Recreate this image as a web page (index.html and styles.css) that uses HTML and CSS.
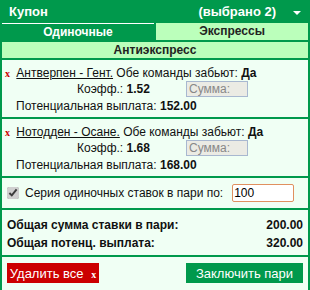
FILE: index.html
```
<!DOCTYPE html>
<html lang="ru">
<head>
    <meta charset="UTF-8">
    <title>Купон</title>
    <link rel="stylesheet" href="styles.css">
</head>
<body>
    <div class="coupon">
        <div class="coupon-head">
            <span class="title">Купон</span>
            <span class="count">(выбрано 2)</span>
            <span class="arrow"></span>
        </div>
        <div class="tabs">
            <div class="tab active">Одиночные</div>
            <div class="tab">Экспрессы</div>
        </div>
        <div class="tab wide">Антиэкспресс</div>
        <div class="coupon-body">
            <div class="bet">
                <div class="bet-line">
                    <span class="remove">x</span>
                    <a class="match">Антверпен - Гент.</a> Обе команды забьют: <b>Да</b>
                </div>
                <div class="bet-odds">
                    <span class="odds">Коэфф.: <b>1.52</b></span>
                    <input type="text" class="stake" placeholder="Сумма:" disabled>
                </div>
                <div class="bet-payout">Потенциальная выплата: <b>152.00</b></div>
            </div>
            <div class="bet">
                <div class="bet-line">
                    <span class="remove">x</span>
                    <a class="match">Нотодден - Осане.</a> Обе команды забьют: <b>Да</b>
                </div>
                <div class="bet-odds">
                    <span class="odds">Коэфф.: <b>1.68</b></span>
                    <input type="text" class="stake" placeholder="Сумма:" disabled>
                </div>
                <div class="bet-payout">Потенциальная выплата: <b>168.00</b></div>
            </div>
            <div class="series">
                <input type="checkbox" id="series" checked>
                <label for="series">Серия одиночных ставок в пари по:</label>
                <input type="text" class="series-input" value="100">
            </div>
            <div class="totals">
                <div class="total-row"><span>Общая сумма ставки в пари:</span><span>200.00</span></div>
                <div class="total-row"><span>Общая потенц. выплата:</span><span>320.00</span></div>
            </div>
            <div class="actions">
                <button class="btn-delete">Удалить все <span class="remove white">x</span></button>
                <button class="btn-place">Заключить пари</button>
            </div>
        </div>
    </div>
</body>
</html>
```

FILE: styles.css
```
body {
    margin: 0;
    font-family: "Liberation Sans", Arial, sans-serif;
    background-color: #ffffff;
}

.coupon {
    width: 310px;
    background-color: #00994c;
}

.coupon-head {
    display: flex;
    align-items: center;
    height: 23px;
    padding: 0 9px;
    color: white;
    font-size: 13px;
    font-weight: bold;
}

.coupon-head .title {
    flex: 1;
}

.coupon-head .count {
    margin-right: 17px;
}

.arrow {
    width: 0;
    height: 0;
    border-left: 4px solid transparent;
    border-right: 4px solid transparent;
    border-top: 4px solid white;
    margin-top: 2px;
}

.tabs {
    display: flex;
    gap: 2px;
    padding: 0 2px;
}

.tab {
    flex: 1;
    height: 17px;
    line-height: 17px;
    text-align: center;
    font-size: 12px;
    font-weight: bold;
    color: #222;
    background-color: #bbffbb;
}

.tab.active {
    background-color: transparent;
    color: white;
    border-top: 1px solid white;
    height: 16px;
}

.tab.wide {
    margin: 2px 2px 2px;
    height: 16px;
    line-height: 16px;
}

.coupon-body {
    margin: 0 2px;
    background-color: #f0fff4;
    color: #111;
    font-size: 12px;
}

.bet {
    padding: 5px 0 2px;
    border-bottom: 2px solid #00994c;
}

.bet-line {
    padding-left: 3px;
    height: 16px;
    line-height: 16px;
    white-space: nowrap;
}

.remove {
    font-family: "Liberation Serif", serif;
    font-weight: bold;
    font-size: 10px;
    color: #cc0000;
    margin-right: 3px;
}

.remove.white {
    color: white;
    margin: 0 0 0 4px;
}

.match {
    text-decoration: underline;
}

.bet-odds {
    display: flex;
    align-items: center;
    height: 16px;
    padding-left: 75px;
}

.odds {
    width: 109px;
}

.stake {
    width: 62px;
    height: 16px;
    box-sizing: border-box;
    padding: 0 2px;
    border: 1px solid #a8b8d0;
    background-color: #ebebe4;
    font-family: inherit;
    font-size: 12px;
}

.stake::placeholder {
    color: #888;
}

.bet-payout {
    padding-left: 14px;
    height: 18px;
    line-height: 18px;
}

.series {
    display: flex;
    align-items: center;
    height: 30px;
    padding-left: 5px;
    white-space: nowrap;
    border-bottom: 2px solid #00994c;
}

.series input[type="checkbox"] {
    margin: 0 6px 0 0;
    width: 12px;
    height: 12px;
    flex-shrink: 0;
    accent-color: #cfcfcf;
}

.series-input {
    margin-left: 9px;
    width: 62px;
    height: 18px;
    box-sizing: border-box;
    padding: 0 1px;
    border: 1px solid #e09060;
    border-radius: 2px;
    font-family: inherit;
    font-size: 12px;
}

.totals {
    padding: 6px 5px 3px;
    border-bottom: 2px solid #00994c;
    font-weight: bold;
    font-size: 12px;
}

.total-row {
    display: flex;
    justify-content: space-between;
    height: 18px;
    line-height: 18px;
}

.actions {
    display: flex;
    justify-content: space-between;
    padding: 6px 5px 10px;
}

.actions button {
    height: 20px;
    border: none;
    padding: 0;
    color: white;
    white-space: nowrap;
    font-family: inherit;
    font-size: 13px;
}

.btn-delete {
    background-color: #cc0000;
    width: 92px;
}

.btn-place {
    background-color: #00994c;
    width: 117px;
}
```
